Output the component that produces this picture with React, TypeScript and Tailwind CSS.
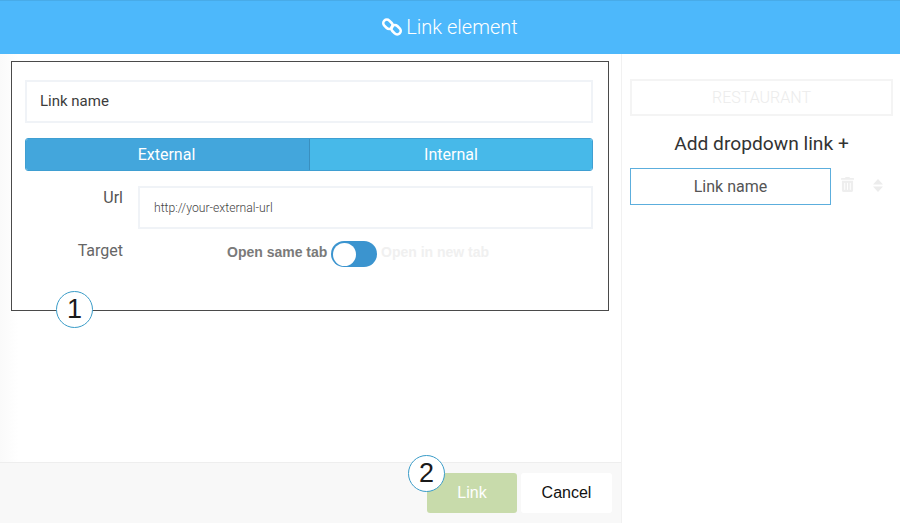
import React from 'react';
import { FaTrashAlt } from 'react-icons/fa';

const Badge: React.FC<{ label: string; className: string }> = ({ label, className }) => (
    <div className={`absolute w-[37px] h-[37px] rounded-full bg-white border-[1.5px] border-[#3a9cc8] flex items-center justify-center text-[27px] text-[#1a1a1a] font-['Liberation_Sans',sans-serif] ${className}`}>
        {label}
    </div>
);

const ChainIcon = () => (
    <svg width="20" height="20" viewBox="0 0 20 20" fill="none" stroke="white" strokeWidth="2.6">
        <rect x="0.8" y="3.8" width="10.4" height="7" rx="3.5" transform="rotate(45 6 7.3)" />
        <rect x="8.8" y="9.2" width="10.4" height="7" rx="3.5" transform="rotate(45 14 12.7)" />
    </svg>
);

export default function App() {
    return (
        <div className="relative w-[900px] h-[523px] overflow-hidden bg-white font-['Roboto',sans-serif] flex flex-col">
            <header className="h-[54px] shrink-0 bg-[#4db8fb] border-t border-[#48abe8] flex items-center justify-center gap-[4px] text-white text-[20px] pb-[2px]">
                <ChainIcon />
                <span className="font-light">Link element</span>
            </header>

            <div className="flex-1 flex min-h-0">
                <div className="w-[622px] shrink-0 flex flex-col border-r border-[#f1f1f1]">
                    <div className="flex-1 pl-[11px] pt-[7px] bg-gradient-to-r from-[#fafafa] to-white to-[3%]">
                        <div className="relative w-[598px] h-[250px] border border-[#4a4a4a] bg-white pl-[13px] pr-[15px] pt-[18px]">
                            <div className="h-[43px] border-2 border-[#f0f3f7] flex items-center pl-[13px] pb-[1px] text-[15px] text-[#3c3c3c]">
                                Link name
                            </div>
                            <div className="mt-[15px] h-[33px] flex rounded-[3px] overflow-hidden border border-[#3f9fd2] text-white text-[16px]">
                                <div className="w-[284px] bg-[#43a6dc] border-r border-[#3a8fbf] flex items-center justify-center pr-[2px]">External</div>
                                <div className="flex-1 bg-[#47b9e9] flex items-center justify-center">Internal</div>
                            </div>
                            <div className="mt-[15px] flex">
                                <div className="w-[98px] text-right text-[16px] text-[#555]">Url</div>
                                <div className="ml-[15px] flex-1 h-[43px] border-2 border-[#f0f3f7] flex items-center pl-[14px] pt-[1px] text-[12.2px] font-light text-[#444]">
                                    http://your-external-url
                                </div>
                            </div>
                            <div className="mt-[12px] flex items-center h-[26px]">
                                <div className="w-[98px] text-right text-[16px] text-[#666] -translate-y-[3px]">Target</div>
                                <div className="ml-[104px] flex items-center font-['Liberation_Sans',sans-serif] font-bold text-[14px]">
                                    <span className="text-[#7a7a7a] w-[101px] -translate-y-[2px]">Open same tab</span>
                                    <div className="ml-[3px] w-[46px] h-[26px] rounded-full bg-[#3b94cf] flex items-center pl-[2px]">
                                        <div className="w-[23px] h-[23px] rounded-full bg-white" />
                                    </div>
                                    <span className="ml-[4px] text-[#f0f0f0] -translate-y-[2px]">Open in new tab</span>
                                </div>
                            </div>
                            <Badge label="1" className="left-[44px] top-[229px]" />
                        </div>
                    </div>

                    <footer className="relative h-[61px] shrink-0 bg-[#f8f8f8] border-t border-[#eeeeee] flex items-start justify-end pt-[10px] pr-[9px] gap-[4px] font-['Liberation_Sans',sans-serif] text-[16px]">
                        <div className="w-[90px] h-[40px] rounded-[3px] bg-[#c8dbab] text-white flex items-center justify-center">Link</div>
                        <div className="w-[91px] h-[40px] rounded-[3px] bg-white text-[#111] flex items-center justify-center">Cancel</div>
                        <Badge label="2" className="left-[408px] -top-[8px]" />
                    </footer>
                </div>

                <aside className="flex-1 pl-[8px] pr-[7px] pt-[25px]">
                    <div className="h-[37px] border-2 border-[#f4f4f4] flex items-center justify-center text-[16px] font-light text-[#ececec]">
                        RESTAURANT
                    </div>
                    <div className="mt-[14px] text-center text-[19.2px] text-[#333] leading-[28px]">Add dropdown link +</div>
                    <div className="mt-[10px] flex items-center">
                        <div className="w-[201px] h-[37px] border-[1.5px] border-[#5caedd] flex items-center justify-center text-[16px] text-[#555]">
                            Link name
                        </div>
                        <FaTrashAlt className="ml-[10px] w-[13px] h-[15px] text-[#eeeeee] -translate-y-[2px]" />
                        <svg className="ml-[19px] -translate-y-[1px]" width="10" height="13" viewBox="0 0 10 13">
                            <path d="M5 0 L10 5.5 H0 Z M0 7.5 H10 L5 13 Z" fill="#ececec" />
                        </svg>
                    </div>
                </aside>
            </div>
        </div>
    );
}
